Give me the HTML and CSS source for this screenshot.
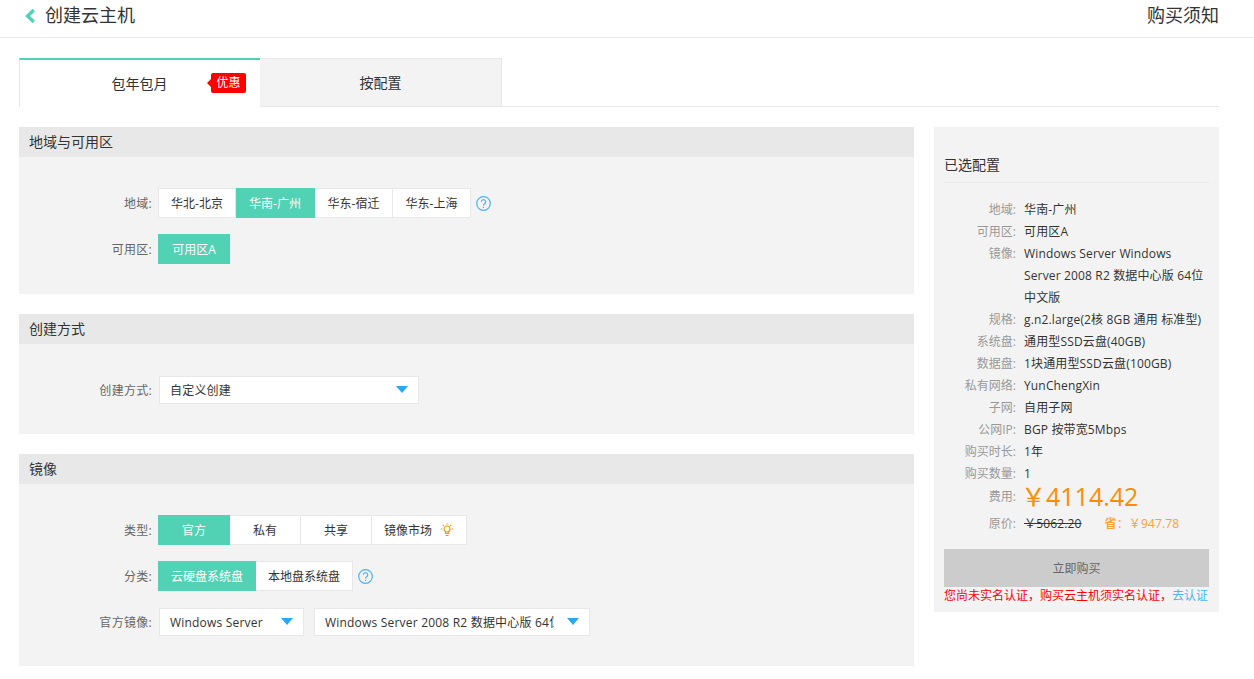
FILE: index.html
```html
<!DOCTYPE html>
<html lang="zh-CN">
  <head>
    <meta charset="UTF-8" />
    <title>创建云主机</title>
    <link rel="stylesheet" href="styles.css">
  </head>
  <body>
    <header class="top-bar">
      <div class="top-title">
        <svg class="back-icon" width="10" height="14" viewBox="0 0 10 14"><polyline points="8.8,1 2.6,7 8.8,13" fill="none" stroke="#52d2b5" stroke-width="3.4"/></svg>
        <span>创建云主机</span>
      </div>
      <a class="top-link">购买须知</a>
    </header>

    <div class="wrap">
      <!-- Tabs -->
      <div class="tabs">
        <div class="tab active">包年包月<span class="badge">优惠</span></div>
        <div class="tab">按配置</div>
      </div>

      <div class="columns">
        <main class="main">
          <section class="section">
            <h2>地域与可用区</h2>
            <div class="section-body">
              <div class="row">
                <label>地域:</label>
                <div class="btn-group btn-group-region">
                  <span class="btn">华北-北京</span>
                  <span class="btn on">华南-广州</span>
                  <span class="btn">华东-宿迁</span>
                  <span class="btn">华东-上海</span>
                </div>
                <svg class="help" width="15" height="15" viewBox="0 0 15 15"><circle cx="7.5" cy="7.5" r="6.8" fill="none" stroke="#4db3f5" stroke-width="1.2"/><path d="M5.3 5.8a2.2 2.2 0 1 1 3.4 1.9c-.8.5-1.2.9-1.2 1.8M7.5 10.7v1.2" fill="none" stroke="#4db3f5" stroke-width="1.2"/></svg>
              </div>
              <div class="row">
                <label>可用区:</label>
                <div class="btn-group"><span class="btn on">可用区A</span></div>
              </div>
            </div>
          </section>

          <section class="section">
            <h2>创建方式</h2>
            <div class="section-body">
              <div class="row row-select">
                <label>创建方式:</label>
                <div class="select select-wide"><span class="select-text">自定义创建</span><i class="caret"></i></div>
              </div>
            </div>
          </section>

          <section class="section">
            <h2>镜像</h2>
            <div class="section-body">
              <div class="row">
                <label>类型:</label>
                <div class="btn-group">
                  <span class="btn on">官方</span>
                  <span class="btn">私有</span>
                  <span class="btn">共享</span>
                  <span class="btn">镜像市场
                    <svg class="bulb" width="14" height="14" viewBox="0 0 14 14"><g fill="none" stroke="#f39c12" stroke-width="1.2"><circle cx="7" cy="6" r="3"/><path d="M5.5 8.5v2h3v-2M5.5 12.5h3M7 .5v1.2M1 6h1.3M11.7 6H13M2.8 2l.9.9M11.2 2l-.9.9"/></g></svg>
                  </span>
                </div>
              </div>
              <div class="row">
                <label>分类:</label>
                <div class="btn-group">
                  <span class="btn on">云硬盘系统盘</span>
                  <span class="btn">本地盘系统盘</span>
                </div>
                <svg class="help" width="15" height="15" viewBox="0 0 15 15"><circle cx="7.5" cy="7.5" r="6.8" fill="none" stroke="#4db3f5" stroke-width="1.2"/><path d="M5.3 5.8a2.2 2.2 0 1 1 3.4 1.9c-.8.5-1.2.9-1.2 1.8M7.5 10.7v1.2" fill="none" stroke="#4db3f5" stroke-width="1.2"/></svg>
              </div>
              <div class="row row-select">
                <label>官方镜像:</label>
                <div class="select select-small"><span class="select-text">Windows Server</span><i class="caret"></i></div>
                <div class="select select-large"><span class="select-text">Windows Server 2008 R2 数据中心版 64位</span><i class="caret"></i></div>
              </div>
            </div>
          </section>
        </main>

        <!-- Right summary -->
        <aside class="summary">
          <h3>已选配置</h3>
          <dl class="summary-list">
            <div><dt>地域:</dt><dd>华南-广州</dd></div>
            <div><dt>可用区:</dt><dd>可用区A</dd></div>
            <div><dt>镜像:</dt><dd>Windows Server Windows Server 2008 R2 数据中心版 64位中文版</dd></div>
            <div><dt>规格:</dt><dd>g.n2.large(2核 8GB 通用 标准型)</dd></div>
            <div><dt>系统盘:</dt><dd>通用型SSD云盘(40GB)</dd></div>
            <div><dt>数据盘:</dt><dd>1块通用型SSD云盘(100GB)</dd></div>
            <div><dt>私有网络:</dt><dd>YunChengXin</dd></div>
            <div><dt>子网:</dt><dd>自用子网</dd></div>
            <div><dt>公网IP:</dt><dd>BGP 按带宽5Mbps</dd></div>
            <div><dt>购买时长:</dt><dd>1年</dd></div>
            <div><dt>购买数量:</dt><dd>1</dd></div>
            <div class="fee"><dt>费用:</dt><dd class="price">￥4114.42</dd></div>
            <div class="origin"><dt>原价:</dt><dd><s>￥5062.20</s><span class="saved"><b>省</b>：￥947.78</span></dd></div>
          </dl>
          <button class="buy">立即购买</button>
          <p class="notice">您尚未实名认证，购买云主机须实名认证，<a>去认证</a></p>
        </aside>
      </div>
    </div>
  </body>
</html>
```

FILE: styles.css
```css
* {
  margin: 0;
  padding: 0;
  box-sizing: border-box;
}

body {
  font-family: "Open Sans", "Noto Sans CJK SC", sans-serif;
  font-size: 12px;
  color: #333;
  background-color: #fff;
}

.top-bar {
  height: 38px;
  padding: 0 35px 8px 25px;
  border-bottom: 1px solid #e8e8e8;
  display: flex;
  justify-content: space-between;
  align-items: center;
  font-size: 18px;
  line-height: 30px;
}

.top-title {
  display: flex;
  align-items: center;
}

.back-icon {
  margin: 3px 10px 0 0;
}

.wrap {
  padding: 20px 35px 0 19px;
}

.tabs {
  display: flex;
  height: 49px;
  border-bottom: 1px solid #e8e8e8;
}

.tab {
  position: relative;
  width: 242px;
  height: 49px;
  border: 1px solid #e8e8e8;
  border-left: none;
  background-color: #f3f3f3;
  font-size: 14px;
  line-height: 47px;
  text-align: center;
}

.tab.active {
  width: 241px;
  padding-right: 1px;
  border-top: 2px solid #52d2b5;
  border-left: 1px solid #e8e8e8;
  border-right: none;
  border-bottom: none;
  background-color: #fff;
  line-height: 47px;
}

.badge {
  position: absolute;
  top: 13px;
  right: 14px;
  width: 35px;
  height: 20px;
  border-radius: 2px;
  background-color: #f00;
  color: #fff;
  font-size: 12px;
  line-height: 20px;
}

.badge::before {
  content: "";
  position: absolute;
  left: -4px;
  top: 6px;
  border-top: 4px solid transparent;
  border-bottom: 4px solid transparent;
  border-right: 4px solid #f00;
}

.columns {
  display: flex;
  align-items: flex-start;
  justify-content: space-between;
  margin-top: 20px;
}

.main {
  width: 895px;
}

.section {
  margin-bottom: 20px;
  background-color: #f3f3f3;
}

.section h2 {
  height: 30px;
  padding-left: 10px;
  background-color: #e8e8e8;
  font-size: 14px;
  font-weight: 400;
  line-height: 30px;
}

.section-body {
  padding: 31px 0 30px;
}

.row {
  display: flex;
  align-items: center;
  height: 30px;
  margin-bottom: 16px;
}

.row:last-child {
  margin-bottom: 0;
}

.row-select {
  height: 28px;
}

.row-select:first-child {
  margin-top: 1px;
}

.row + .row-select {
  margin-top: 17px;
}

.row label {
  width: 133px;
  color: #666;
  letter-spacing: 0.3px;
  text-align: right;
}

.btn-group {
  display: flex;
  margin-left: 6px;
}

.btn {
  display: flex;
  align-items: center;
  justify-content: center;
  min-width: 71px;
  height: 30px;
  padding: 0 12px;
  border: 1px solid #e8e8e8;
  border-left: none;
  background-color: #fff;
  white-space: nowrap;
}

.btn:first-child {
  min-width: 72px;
  border-left: 1px solid #e8e8e8;
}

.btn.on {
  border-color: #52d2b5;
  background-color: #52d2b5;
  color: #fff;
}

.btn-group-region .btn {
  width: 78px;
}

.btn-group-region .btn.on {
  width: 79px;
}

.help {
  margin-left: 5px;
}

.bulb {
  margin-left: 8px;
}

.select {
  display: flex;
  align-items: center;
  justify-content: space-between;
  height: 28px;
  margin-left: 7px;
  padding: 0 10px;
  border: 1px solid #e8e8e8;
  background-color: #fff;
  letter-spacing: 0.2px;
}

.select-wide {
  width: 260px;
}

.select-small {
  width: 145px;
}

.select-large {
  width: 276px;
  margin-left: 10px;
}

.select-text {
  overflow: hidden;
  white-space: nowrap;
}

.select-large .select-text {
  width: 229px;
}

.caret {
  flex: none;
  margin: -2px 0 0 2px;
  border-left: 6px solid transparent;
  border-right: 6px solid transparent;
  border-top: 7px solid #2da6f5;
}

.summary {
  width: 285px;
  height: 485px;
  padding: 28px 10px 0;
  background-color: #f3f3f3;
}

.summary h3 {
  height: 28px;
  border-bottom: 1px solid #e8e8e8;
  font-size: 14px;
  font-weight: 400;
  line-height: 20px;
}

.summary-list {
  margin-top: 16px;
  line-height: 22px;
}

.summary-list > div {
  display: flex;
}

.summary-list dt {
  flex: none;
  width: 72px;
  color: #999;
  text-align: right;
}

.summary-list dd {
  flex: 1;
  margin-left: 8px;
  letter-spacing: 0.15px;
}

.fee {
  height: 24px;
}

.summary-list .fee dt {
  line-height: 24px;
}

.summary-list .price {
  margin-left: 5px;
  color: #ff8c00;
  font-size: 25px;
  line-height: 22px;
  letter-spacing: 0;
}

.origin {
  margin-top: 4px;
}

.origin s {
  color: #333;
}

.saved {
  margin-left: 23px;
  color: #ffa033;
}

.saved b {
  font-weight: 700;
}

.buy {
  display: block;
  width: 100%;
  height: 38px;
  margin-top: 14px;
  border: none;
  background-color: #ccc;
  color: #666;
  font: inherit;
}

.notice {
  color: #f00;
  line-height: 18px;
  white-space: nowrap;
}

.notice a {
  color: #4db3f5;
}
```
